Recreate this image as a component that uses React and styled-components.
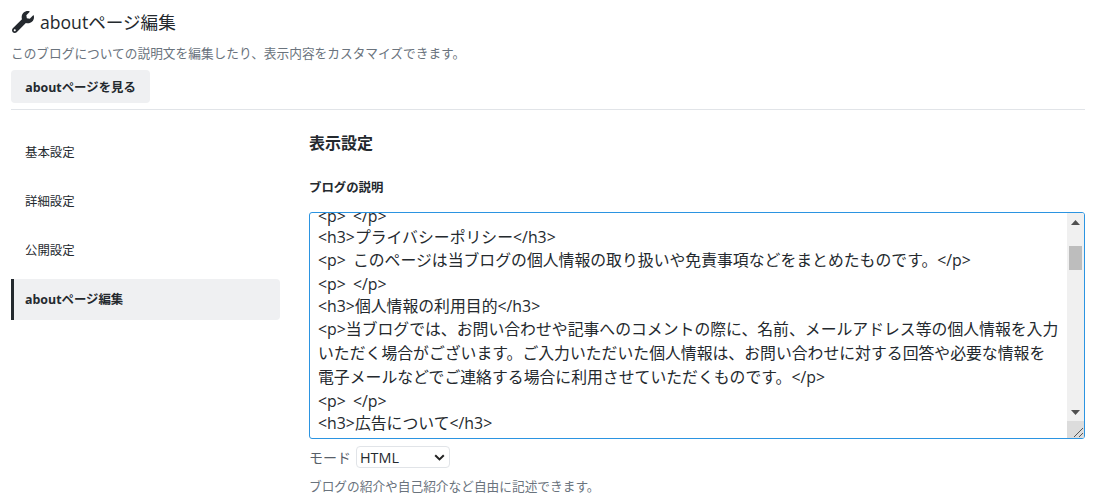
import styled, { createGlobalStyle } from "styled-components";
import { FaWrench } from "react-icons/fa";

const GlobalStyle = createGlobalStyle`
  html, body {
    margin: 0;
    padding: 0;
    background: #fff;
    overflow: hidden;
  }
  body {
    font-family: "Open Sans", "Noto Sans CJK JP", sans-serif;
    color: #24292e;
  }
`;

const Page = styled.div`
  width: 1074px;
  height: 499px;
  padding: 0 14px 0 11px;
  overflow: hidden;
`;
const Header = styled.header`
  border-bottom: 1px solid #e1e4e8;
  height: 110px;
  box-sizing: border-box;
  padding-top: 10px;
`;
const Title = styled.h1`
  display: flex;
  align-items: center;
  gap: 6px;
  margin: 0;
  height: 23px;
  padding-left: 1px;
  font-size: 17.6px;
  font-weight: 400;
  color: #24292e;
`;
const Lead = styled.p`
  margin: 11px 0 0;
  font-size: 12.7px;
  line-height: 18px;
  color: #6a737d;
`;
const ViewButton = styled.a`
  display: flex;
  align-items: center;
  justify-content: center;
  width: 139px;
  height: 33px;
  margin-top: 8px;
  border-radius: 4px;
  background: #eff0f2;
  font-size: 12.4px;
  font-weight: 700;
  color: #24292e;
`;
const Body = styled.div`
  display: flex;
  padding-top: 22px;
`;
const Side = styled.nav`
  display: flex;
  flex-direction: column;
  gap: 8px;
  width: 269px;
  margin-right: 29px;
`;
const SideItem = styled.a`
  box-sizing: border-box;
  display: flex;
  align-items: center;
  height: 41px;
  padding-bottom: 1px;
  padding-left: ${(props) => (props.$active ? "11px" : "14px")};
  border-left: ${(props) => (props.$active ? "3px solid #24292e" : "none")};
  border-radius: ${(props) => (props.$active ? "0 4px 4px 0" : "4px")};
  background: ${(props) => (props.$active ? "#eff0f2" : "transparent")};
  font-size: 12.4px;
  font-weight: ${(props) => (props.$active ? 700 : 400)};
  color: #24292e;
`;
const Main = styled.main`
  flex: 1;
  min-width: 0;
`;
const Section = styled.h2`
  margin: 0;
  height: 22px;
  font-size: 16px;
  line-height: 22px;
  font-weight: 700;
  color: #24292e;
`;
const Label = styled.label`
  display: block;
  margin-top: 25px;
  height: 18px;
  font-size: 12.4px;
  line-height: 18px;
  font-weight: 700;
`;
const Editor = styled.div`
  display: flex;
  height: 225px;
  margin-top: 15px;
  border: 1px solid #2b94e1;
  border-radius: 3px;
  overflow: hidden;
`;
const Content = styled.div`
  flex: 1;
  min-width: 0;
  padding: 0 6px 0 8px;
  overflow: hidden;
`;
const Lines = styled.div`
  margin-top: -7px;
`;
const Line = styled.div`
  height: ${(props) => props.$h}px;
  line-height: ${(props) => props.$h}px;
  font-size: 15.85px;
  word-spacing: 3px;
  white-space: pre;
  color: #24292e;
`;
const Scrollbar = styled.div`
  display: flex;
  flex-direction: column;
  align-items: center;
  width: 17px;
  background: #f0f0f0;
`;
const ArrowBox = styled.div`
  flex: none;
  width: 17px;
  height: ${(props) => props.$h}px;
  display: flex;
  align-items: center;
  justify-content: center;
`;
const Thumb = styled.div`
  flex: none;
  width: 13px;
  height: 24px;
  margin-top: 14px;
  background: #bdbdbd;
`;
const Spacer = styled.div`
  flex: 1;
`;
const Corner = styled.div`
  flex: none;
  width: 17px;
  height: 17px;
  background: #dcdcdc;
`;
const ModeRow = styled.div`
  display: flex;
  align-items: center;
  gap: 5px;
  margin-top: 7px;
  height: 22px;
`;
const ModeLabel = styled.span`
  font-size: 14px;
  color: #586069;
`;
const ModeSelect = styled.div`
  box-sizing: border-box;
  display: flex;
  align-items: center;
  justify-content: space-between;
  width: 94px;
  height: 22px;
  padding: 0 4px 0 3px;
  border: 1px solid #e1e4e8;
  border-radius: 4px;
  font-size: 14.4px;
  color: #24292e;
`;
const Help = styled.p`
  margin: 9px 0 0;
  font-size: 12.7px;
  line-height: 18px;
  color: #6a737d;
`;

const lines = [
  { h: 21, text: "<p> </p>" },
  { h: 21, text: "<h3>プライバシーポリシー</h3>" },
  { h: 24, text: "<p> このページは当ブログの個人情報の取り扱いや免責事項などをまとめたものです。</p>" },
  { h: 24, text: "<p> </p>" },
  { h: 21, text: "<h3>個人情報の利用目的</h3>" },
  { h: 24, text: "<p>当ブログでは、お問い合わせや記事へのコメントの際に、名前、メールアドレス等の個人情報を入力" },
  { h: 24, text: "いただく場合がございます。ご入力いただいた個人情報は、お問い合わせに対する回答や必要な情報を" },
  { h: 24, text: "電子メールなどでご連絡する場合に利用させていただくものです。</p>" },
  { h: 24, text: "<p> </p>" },
  { h: 21, text: "<h3>広告について</h3>" },
];

const navItems = ["基本設定", "詳細設定", "公開設定", "aboutページ編集"];

const Arrow = ({ down }) => (
  <svg width="9" height="5" viewBox="0 0 9 5">
    <path d={down ? "M0 0H9L4.5 5Z" : "M0 5H9L4.5 0Z"} fill="#505050" />
  </svg>
);

const Grip = () => (
  <svg width="17" height="17" viewBox="0 0 17 17">
    <path d="M7 16L16 7M12 16L16 12" stroke="#555" strokeWidth="1" fill="none" />
  </svg>
);

const Chevron = () => (
  <svg width="11" height="7" viewBox="0 0 11 7">
    <path d="M1.2 1.2L5.5 5.4L9.8 1.2" stroke="#222" strokeWidth="2" fill="none" />
  </svg>
);

const App = () => {
  return (
    <Page>
      <GlobalStyle />
      <Header>
        <Title>
          <FaWrench size={22} color="#24292e" />
          aboutページ編集
        </Title>
        <Lead>このブログについての説明文を編集したり、表示内容をカスタマイズできます。</Lead>
        <ViewButton>aboutページを見る</ViewButton>
      </Header>
      <Body>
        <Side>
          {navItems.map((item, i) => (
            <SideItem key={item} $active={i === 3}>
              {item}
            </SideItem>
          ))}
        </Side>
        <Main>
          <Section>表示設定</Section>
          <Label>ブログの説明</Label>
          <Editor>
            <Content>
              <Lines>
                {lines.map((line, i) => (
                  <Line key={i} $h={line.h}>
                    {line.text}
                  </Line>
                ))}
              </Lines>
            </Content>
            <Scrollbar>
              <ArrowBox $h={19}>
                <Arrow />
              </ArrowBox>
              <Thumb />
              <Spacer />
              <ArrowBox $h={17}>
                <Arrow down />
              </ArrowBox>
              <Corner>
                <Grip />
              </Corner>
            </Scrollbar>
          </Editor>
          <ModeRow>
            <ModeLabel>モード</ModeLabel>
            <ModeSelect>
              HTML
              <Chevron />
            </ModeSelect>
          </ModeRow>
          <Help>ブログの紹介や自己紹介など自由に記述できます。</Help>
        </Main>
      </Body>
    </Page>
  );
};

export default App;
